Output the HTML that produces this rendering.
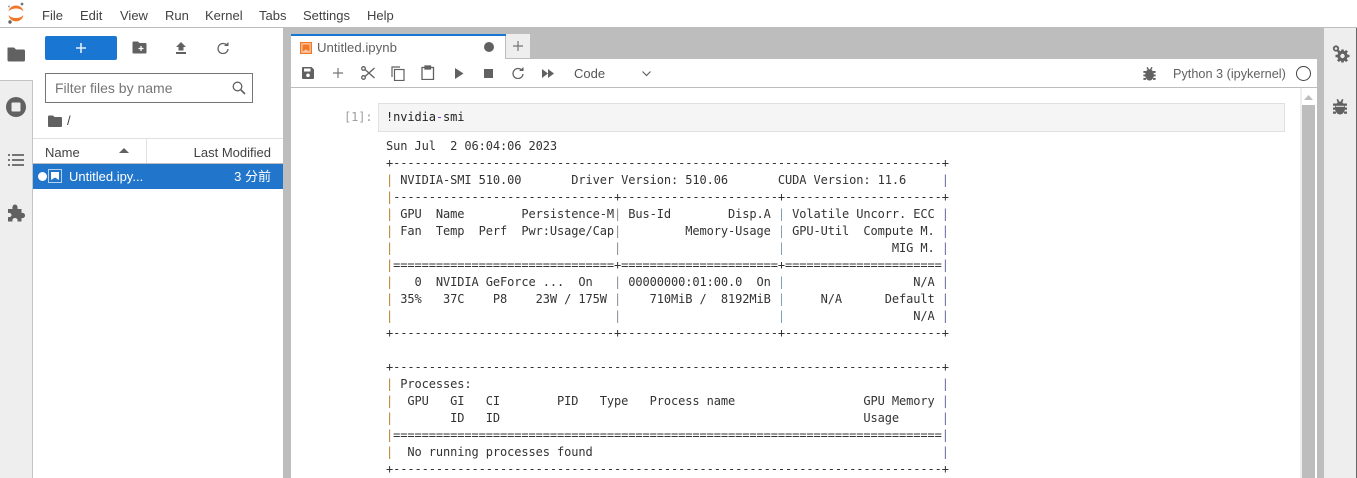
<!DOCTYPE html>
<html><head><meta charset="utf-8"><style>
html,body{margin:0;padding:0;width:1357px;height:478px;overflow:hidden;background:#fff}
body{position:relative;font-family:"Liberation Sans","Noto Sans CJK SC",sans-serif;color:#424242;font-size:13px}
.a{position:absolute}
.t{position:absolute;white-space:nowrap;line-height:16px}
svg{position:absolute;display:block}
pre{position:absolute;margin:0;font-family:"DejaVu Sans Mono",monospace;font-size:12px;letter-spacing:-.1px;line-height:17px;color:#333}
.l{color:#b9812f}.r{color:#6a6aa0}.m{color:#8a8f96}.b{color:#7fa0b8}
</style></head><body>
<!-- menu bar -->
<div class="a" style="left:0;top:27px;width:1357px;height:1px;background:#bdbdbd"></div>
<svg style="left:0;top:0" width="30" height="27" viewBox="0 0 30 27"><path d="M8.500 11.500C10 3.500 22 3.500 23.500 11.500C20 7.500 12 7.500 8.500 11.500Z" fill="#f37726"/><path d="M8.500 15C10 23.500 22 23.500 23.500 15C20 19 12 19 8.500 15Z" fill="#f37726"/><circle cx="22" cy="4" r="1.400" fill="#767677"/><circle cx="10" cy="22" r="1.700" fill="#616262"/><circle cx="9" cy="6.500" r="1" fill="#9e9e9e"/></svg>
<div class="t" style="left:42px;top:8px">File</div>
<div class="t" style="left:80px;top:8px">Edit</div>
<div class="t" style="left:120px;top:8px">View</div>
<div class="t" style="left:165px;top:8px">Run</div>
<div class="t" style="left:205px;top:8px">Kernel</div>
<div class="t" style="left:259px;top:8px">Tabs</div>
<div class="t" style="left:303px;top:8px">Settings</div>
<div class="t" style="left:367px;top:8px">Help</div>

<!-- left sidebar -->
<div class="a" style="left:0;top:80px;width:32px;height:398px;background:#eee"></div>
<div class="a" style="left:0;top:80px;width:33px;height:1px;background:#c4c4c4"></div>
<div class="a" style="left:32px;top:80px;width:1px;height:398px;background:#c4c4c4"></div>
<svg style="left:7px;top:46px" width="18" height="16" viewBox="0 0 18 16"><path d="M1 1.500H7L9 3.500H16.500Q18 3.500 18 5V14Q18 15.500 16.500 15.500H2Q.5 15.500 .5 14V2Q.5 1.500 1 1.500Z" fill="#616161"/></svg>
<svg style="left:6px;top:97px" width="20" height="20" viewBox="0 0 20 20"><circle cx="10" cy="10" r="10" fill="#616161"/><rect x="5.500" y="5.500" width="9" height="9" rx="1" fill="#eee"/></svg>
<svg style="left:8px;top:153px" width="16" height="14" viewBox="0 0 16 14" fill="#757575"><rect x="0" y="1" width="2" height="2"/><rect x="4" y="1" width="12" height="2"/><rect x="0" y="6" width="2" height="2"/><rect x="4" y="6" width="12" height="2"/><rect x="0" y="11" width="2" height="2"/><rect x="4" y="11" width="12" height="2"/></svg>
<svg style="left:7px;top:204px" width="18" height="18" viewBox="0 0 18 18"><path d="M1 5H5.500C5 2 6.500 .5 8 .5S11 2 10.500 5H14.500V9C17 8.500 18 10 18 11.500S17 14.500 14.500 14V17.500H10.500C11 15 9.500 14 8 14S5 15 5.500 17.500H1V13C3 13.500 4.500 12.500 4.500 11S3 8.500 1 9Z" fill="#616161"/></svg>

<!-- file browser -->
<div class="a" style="left:45px;top:36px;width:72px;height:24px;background:#1976d2;border-radius:2px"></div>
<svg style="left:75px;top:42px" width="12" height="12" viewBox="0 0 12 12"><path d="M1 6H11M6 1V11" stroke="#e3eefa" stroke-width="1.600"/></svg>
<svg style="left:132px;top:41px" width="15" height="13" viewBox="0 0 15 13"><path d="M1.500 .5H6L7.500 2H13.500Q14.500 2 14.500 3V11.500Q14.500 12.500 13.500 12.500H1.500Q.5 12.500 .5 11.500V1.500Q.5 .5 1.500 .5Z" fill="#616161"/><path d="M6.500 7.500H11.500M9 5V10" stroke="#fff" stroke-width="1.300"/></svg>
<svg style="left:175px;top:42px" width="12" height="12" viewBox="0 0 12 12"><path d="M3.500 8.500V5H1L6 0L11 5H8.500V8.500ZM1 10H11V12H1Z" fill="#616161"/></svg>
<svg style="left:217px;top:42px" width="12" height="12" viewBox="0 0 12 12"><path d="M10 3.500A5 5 0 1 0 11 7" fill="none" stroke="#616161" stroke-width="1.300"/><path d="M7 4H11.500V0Z" fill="#616161"/></svg>
<div class="a" style="left:45px;top:73px;width:206px;height:28px;border:1px solid #757575"></div>
<div class="t" style="left:55px;top:80px;font-size:14px;color:#757575">Filter files by name</div>
<svg style="left:232px;top:81px" width="14" height="14" viewBox="0 0 14 14"><circle cx="5.500" cy="5.500" r="4.300" fill="none" stroke="#616161" stroke-width="1.300"/><path d="M8.700 8.700L13 13" stroke="#616161" stroke-width="1.600"/></svg>
<svg style="left:48px;top:115px" width="14" height="12" viewBox="0 0 14 12"><path d="M1 .5H5L6.500 2H13Q14 2 14 3V11Q14 12 13 12H1Q0 12 0 11V1.500Q0 .5 1 .5Z" fill="#616161"/></svg>
<div class="t" style="left:67px;top:113px">/</div>
<div class="a" style="left:33px;top:138px;width:250px;height:1px;background:#e0e0e0"></div>
<div class="a" style="left:146px;top:139px;width:1px;height:24px;background:#e0e0e0"></div>
<div class="a" style="left:33px;top:163px;width:250px;height:1px;background:#bdbdbd"></div>
<div class="t" style="left:45px;top:145px">Name</div>
<svg style="left:119px;top:148px" width="10" height="5" viewBox="0 0 10 5"><path d="M0 5L5 0L10 5Z" fill="#616161"/></svg>
<div class="t" style="right:1086px;top:145px;transform:translateX(1000px);" hidden></div>
<div class="t" style="left:191px;top:145px;width:80px;text-align:right">Last Modified</div>
<div class="a" style="left:33px;top:164px;width:250px;height:25px;background:#2176cc"></div>
<div class="a" style="left:38px;top:172px;width:9px;height:9px;border-radius:50%;background:#fff"></div>
<svg style="left:48px;top:169px" width="14" height="14" viewBox="0 0 14 14"><rect x=".5" y=".5" width="13" height="13" fill="none" stroke="#b6d3ee"/><path d="M3 3H11V11L7 8.500L3 11Z" fill="#fff"/></svg>
<div class="t" style="left:69px;top:169px;color:#fff">Untitled.ipy...</div>
<div class="t" style="left:221px;top:169px;width:50px;text-align:right;color:#fff">3 分前</div>

<!-- splitter & main bg -->
<div class="a" style="left:283px;top:28px;width:8px;height:450px;background:#bdbdbd"></div>
<div class="a" style="left:291px;top:28px;width:1033px;height:31px;background:#bdbdbd"></div>
<div class="a" style="left:1317px;top:28px;width:7px;height:450px;background:#bdbdbd"></div>
<div class="a" style="left:1324px;top:28px;width:32px;height:450px;background:#eee"></div>
<div class="a" style="left:1356px;top:28px;width:1px;height:450px;background:#666"></div>
<svg style="left:1332px;top:45px" width="18" height="18" viewBox="0 0 18 18" fill="#616161"><circle cx="4" cy="3.500" r="2.200" fill="none" stroke="#616161" stroke-width="1.800"/><circle cx="10.500" cy="11" r="3.700" fill="none" stroke="#616161" stroke-width="3"/><path d="M9.200 4.500h2.600v2.500H9.200ZM9.200 15h2.600v2.500H9.200ZM3.500 9.700H6v2.600H3.500ZM15 9.700h2.500v2.600H15Z"/><path d="M5 6.500L7 5l2 2l-2 2ZM14 5l2 1.500l-2 2.500l-2-2ZM5 15.500L7 13l2 2l-2 2ZM14 17l2-1.500l-2-2.500l-2 2Z"/></svg>
<svg style="left:1333px;top:99px" width="14" height="16" viewBox="0 0 14 16" fill="#616161"><ellipse cx="7" cy="9" rx="5" ry="6.500"/><path d="M0 4.500h3v2.200H0ZM11 4.500h3v2.200h-3ZM0 8.500h3v2.200H0ZM11 8.500h3v2.200h-3ZM0 12.500h3v2.200H0ZM11 12.500h3v2.200h-3ZM3.500 .5L5 0l1.500 3H4.500ZM10.500 .5L9 0L7.500 3h2Z"/><rect x="3" y="6.800" width="8" height="1" fill="#eee"/></svg>

<!-- tabs -->
<div class="a" style="left:291px;top:34px;width:214px;height:25px;background:#fff"></div>
<div class="a" style="left:291px;top:34px;width:215px;height:2px;background:#1976d2"></div>
<div class="a" style="left:506px;top:34px;width:24px;height:24px;background:#eee"></div>
<div class="a" style="left:505px;top:36px;width:1px;height:23px;background:#bdbdbd"></div>
<svg style="left:300px;top:42px" width="12" height="12" viewBox="0 0 12 12"><rect width="12" height="12" fill="#f37726"/><rect x="1.200" y="1.200" width="9.600" height="9.600" fill="#fbc9a8"/><path d="M2.500 2.500H9.500V9.500L6 7.500L2.500 9.500Z" fill="#f37726"/></svg>
<div class="t" style="left:317px;top:40px;color:#616161;font-size:13.200px">Untitled.ipynb</div>
<div class="a" style="left:484px;top:42px;width:10px;height:10px;border-radius:50%;background:#616161"></div>
<svg style="left:513px;top:41px" width="10" height="10" viewBox="0 0 10 10"><path d="M0 5H10M5 0V10" stroke="#757575" stroke-width="1.200"/></svg>

<!-- toolbar -->
<div class="a" style="left:291px;top:59px;width:1026px;height:28px;background:#fff"></div>
<div class="a" style="left:291px;top:87px;width:1026px;height:1px;background:#bdbdbd"></div>
<svg style="left:302px;top:67px" width="12" height="12" viewBox="0 0 12 12"><path d="M1 0H9.500L12 2.500V11Q12 12 11 12H1Q0 12 0 11V1Q0 0 1 0Z" fill="#616161"/><rect x="2" y="1.500" width="6.500" height="3" fill="#fff"/><circle cx="6" cy="8.300" r="1.800" fill="#fff"/></svg>
<svg style="left:333px;top:68px" width="10" height="10" viewBox="0 0 10 10"><path d="M0 5H10M5 0V10" stroke="#757575" stroke-width="1.200"/></svg>
<svg style="left:361px;top:66px" width="14" height="14" viewBox="0 0 14 14" fill="none" stroke="#616161" stroke-width="1.300"><circle cx="2.500" cy="2.500" r="1.800"/><circle cx="2.500" cy="11.500" r="1.800"/><path d="M4 3.500L13.500 12M4 10.500L13.500 2"/></svg>
<svg style="left:391px;top:66px" width="14" height="15" viewBox="0 0 14 15" fill="none" stroke="#616161" stroke-width="1.200"><path d="M1 11V1H9"/><rect x="3.500" y="3.500" width="9.500" height="11"/></svg>
<svg style="left:421px;top:65px" width="14" height="15" viewBox="0 0 14 15" fill="none" stroke="#616161" stroke-width="1.300"><rect x="1" y="2.500" width="11.500" height="12"/><rect x="4" y="1" width="5.500" height="3" fill="#616161"/></svg>
<svg style="left:455px;top:68px" width="9" height="11" viewBox="0 0 9 11"><path d="M0 0L8.500 5.500L0 11Z" fill="#616161"/></svg>
<div class="a" style="left:484px;top:69px;width:9px;height:9px;background:#616161"></div>
<svg style="left:512px;top:67px" width="12" height="12" viewBox="0 0 12 12"><path d="M10 3.500A5 5 0 1 0 11 7" fill="none" stroke="#616161" stroke-width="1.300"/><path d="M7 4H11.500V0Z" fill="#616161"/></svg>
<svg style="left:542px;top:69px" width="12" height="9" viewBox="0 0 12 9"><path d="M0 0L6 4.500L0 9ZM6 0L12 4.500L6 9Z" fill="#616161"/></svg>
<div class="t" style="left:574px;top:66px;color:#555">Code</div>
<svg style="left:642px;top:71px" width="9" height="6" viewBox="0 0 9 6"><path d="M.5 .5L4.500 4.500L8.500 .5" fill="none" stroke="#616161" stroke-width="1.200"/></svg>
<svg style="left:1143px;top:67px" width="13" height="14" viewBox="0 0 14 16" fill="#616161"><ellipse cx="7" cy="9" rx="5" ry="6.500"/><path d="M0 4.500h3v2.200H0ZM11 4.500h3v2.200h-3ZM0 8.500h3v2.200H0ZM11 8.500h3v2.200h-3ZM0 12.500h3v2.200H0ZM11 12.500h3v2.200h-3ZM3.500 .5L5 0l1.500 3H4.500ZM10.500 .5L9 0L7.500 3h2Z"/></svg>
<div class="t" style="left:1173px;top:66px;color:#616161;font-size:12.700px">Python 3 (ipykernel)</div>
<div class="a" style="left:1296px;top:66px;width:13px;height:13px;border:1px solid #424242;border-radius:50%"></div>

<!-- scrollbar -->
<div class="a" style="left:1300px;top:88px;width:2px;height:390px;background:#eee"></div>
<div class="a" style="left:1302px;top:105px;width:13px;height:373px;background:#bdbdbd"></div>
<svg style="left:1304px;top:95px" width="9" height="5" viewBox="0 0 9 5"><path d="M0 5L4.500 0L9 5Z" fill="#bdbdbd"/></svg>

<!-- cell -->
<pre style="left:344px;top:109px;color:#9e9e9e">[1]:</pre>
<div class="a" style="left:378px;top:103px;width:905px;height:27px;background:#f5f5f5;border:1px solid #e0e0e0"></div>
<pre style="left:386px;top:109px;color:#222">!nvidia<span style="color:#7a3fc4">-</span>smi</pre>
<pre style="left:386px;top:138px">Sun Jul  2 06:04:06 2023
+-----------------------------------------------------------------------------+
<span class="l">|</span> NVIDIA-SMI 510.00       Driver Version: 510.06       CUDA Version: 11.6     <span class="r">|</span>
<span class="l">|</span>-------------------------------+----------------------+----------------------+
<span class="l">|</span> GPU  Name        Persistence-M<span class="m">|</span> Bus-Id        Disp.A <span class="b">|</span> Volatile Uncorr. ECC <span class="r">|</span>
<span class="l">|</span> Fan  Temp  Perf  Pwr:Usage/Cap<span class="m">|</span>         Memory-Usage <span class="b">|</span> GPU-Util  Compute M. <span class="r">|</span>
<span class="l">|</span>                               <span class="m">|</span>                      <span class="b">|</span>               MIG M. <span class="r">|</span>
<span class="l">|</span>===============================+======================+======================<span class="r">|</span>
<span class="l">|</span>   0  NVIDIA GeForce ...  On   <span class="m">|</span> 00000000:01:00.0  On <span class="b">|</span>                  N/A <span class="r">|</span>
<span class="l">|</span> 35%   37C    P8    23W / 175W <span class="m">|</span>    710MiB /  8192MiB <span class="b">|</span>     N/A      Default <span class="r">|</span>
<span class="l">|</span>                               <span class="m">|</span>                      <span class="b">|</span>                  N/A <span class="r">|</span>
+-------------------------------+----------------------+----------------------+

+-----------------------------------------------------------------------------+
<span class="l">|</span> Processes:                                                                  <span class="r">|</span>
<span class="l">|</span>  GPU   GI   CI        PID   Type   Process name                  GPU Memory <span class="r">|</span>
<span class="l">|</span>        ID   ID                                                   Usage      <span class="r">|</span>
<span class="l">|</span>=============================================================================<span class="r">|</span>
<span class="l">|</span>  No running processes found                                                 <span class="r">|</span>
+-----------------------------------------------------------------------------+</pre>
</body></html>
